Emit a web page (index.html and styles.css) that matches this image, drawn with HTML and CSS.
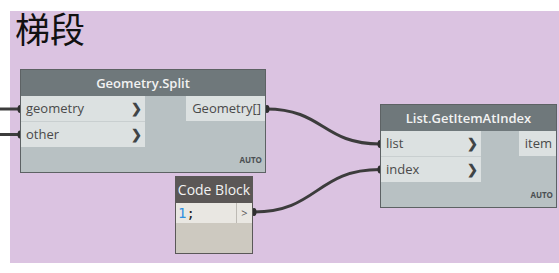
FILE: index.html
```html
<!DOCTYPE html>
<html lang="en">
<head>
    <meta charset="UTF-8">
    <title>梯段</title>
    <link rel="stylesheet" href="styles.css">
</head>
<body>

<div class="canvas">
    <!-- Group backdrop -->
    <div class="group">
        <div class="group-title">梯段</div>
    </div>

    <!-- Wires -->
    <svg class="wires" width="559" height="273" viewBox="0 0 559 273">
        <path d="M0 109 L20 109" />
        <path d="M0 134.5 L20 134.5" />
        <path d="M266 109 C324 109 322 144 380 144" />
        <path d="M253 212 C318 212 316 169.5 380 169.5" />
        <g class="nub">
            <ellipse cx="20" cy="109" rx="2.5" ry="4" />
            <ellipse cx="20" cy="134.5" rx="2.5" ry="4" />
            <ellipse cx="267" cy="109" rx="2.5" ry="4" />
            <ellipse cx="380" cy="144" rx="2.5" ry="4" />
            <ellipse cx="380" cy="169.5" rx="2.5" ry="4" />
            <ellipse cx="254" cy="212" rx="2.5" ry="4" />
        </g>
    </svg>

    <!-- Geometry.Split -->
    <div class="node split">
        <div class="node-header">Geometry.Split</div>
        <div class="node-body">
            <div class="inputs">
                <div class="port"><span>geometry</span><span class="chev">&#x276F;</span></div>
                <div class="port"><span>other</span><span class="chev">&#x276F;</span></div>
            </div>
            <div class="outputs">
                <div class="port out">Geometry[]</div>
            </div>
        </div>
        <div class="lacing">AUTO</div>
    </div>

    <!-- List.GetItemAtIndex -->
    <div class="node getitem">
        <div class="node-header">List.GetItemAtIndex</div>
        <div class="node-body">
            <div class="inputs">
                <div class="port"><span>list</span><span class="chev">&#x276F;</span></div>
                <div class="port"><span>index</span><span class="chev">&#x276F;</span></div>
            </div>
            <div class="outputs">
                <div class="port out">item</div>
            </div>
        </div>
        <div class="lacing">AUTO</div>
    </div>

    <!-- Code Block -->
    <div class="node code">
        <div class="node-header">Code Block</div>
        <div class="code-line">
            <div class="code-text"><span class="num">1</span>;</div>
            <div class="code-out">&gt;</div>
        </div>
    </div>
</div>

</body>
</html>
```

FILE: styles.css
```css
body {
    margin: 0;
    background-color: #ffffff;
    font-family: "Open Sans", "Noto Sans", sans-serif;
}

.canvas {
    position: relative;
    width: 559px;
    height: 273px;
    overflow: hidden;
}

.group {
    position: absolute;
    left: 10px;
    top: 11px;
    right: 0;
    height: 252px;
    background-color: #dbc3e1;
}

.group-title {
    font-family: "Noto Sans CJK SC", "Noto Sans CJK JP", sans-serif;
    font-size: 35px;
    line-height: 38px;
    color: #111;
    padding: 0 0 0 5px;
    margin-top: -2px;
}

.wires {
    position: absolute;
    left: 0;
    top: 0;
}

.wires path {
    fill: none;
    stroke: #3c3c3c;
    stroke-width: 3;
}

.wires .nub ellipse {
    fill: #2f2f2f;
}

.node {
    position: absolute;
    box-sizing: border-box;
    border: 1px solid #5d6264;
    background-color: #b8c1c3;
}

.split {
    left: 20px;
    top: 69px;
    width: 246px;
    height: 104px;
}

.getitem {
    left: 380px;
    top: 104px;
    width: 177px;
    height: 104px;
}

.node-header {
    height: 26px;
    line-height: 26px;
    background-color: #6f787b;
    color: #f2f2f2;
    font-size: 13px;
    font-weight: 600;
    text-align: center;
}

.node-body {
    display: flex;
    justify-content: space-between;
}

.inputs {
    display: flex;
    flex-direction: column;
    gap: 1px;
}

.split .inputs { width: 124px; }
.getitem .inputs { width: 100px; }

.port {
    height: 25px;
    line-height: 25px;
    background-color: #dce1e1;
    color: #4a4a4a;
    font-size: 13px;
    display: flex;
    justify-content: space-between;
    padding: 0 3px 0 5px;
}

.inputs .port + .port {
    box-shadow: 0 -1px 0 #c9cfd0;
}

.chev {
    font-size: 13px;
    font-weight: bold;
    color: #3f4446;
}

.port.out {
    padding: 0 4px 0 6px;
}

.lacing {
    position: absolute;
    right: 3px;
    bottom: 7px;
    font-size: 8px;
    font-weight: bold;
    color: #4a4f52;
}

.code {
    left: 175px;
    top: 176px;
    width: 78px;
    height: 78px;
    border-color: #5a5858;
    background-color: #cdc9c0;
}

.code .node-header {
    background-color: #5b5756;
    font-weight: normal;
    font-size: 14px;
}

.code-line {
    display: flex;
    height: 20px;
    line-height: 20px;
    background-color: #e9e7e2;
}

.code-text {
    width: 58px;
    padding-left: 2px;
    font-family: "DejaVu Sans Mono", monospace;
    font-size: 14px;
    color: #222;
    border-right: 1px solid #bdbab4;
}

.num {
    color: #2f8fe0;
}

.code-out {
    flex: 1;
    text-align: center;
    font-size: 11px;
    color: #555;
}
```
